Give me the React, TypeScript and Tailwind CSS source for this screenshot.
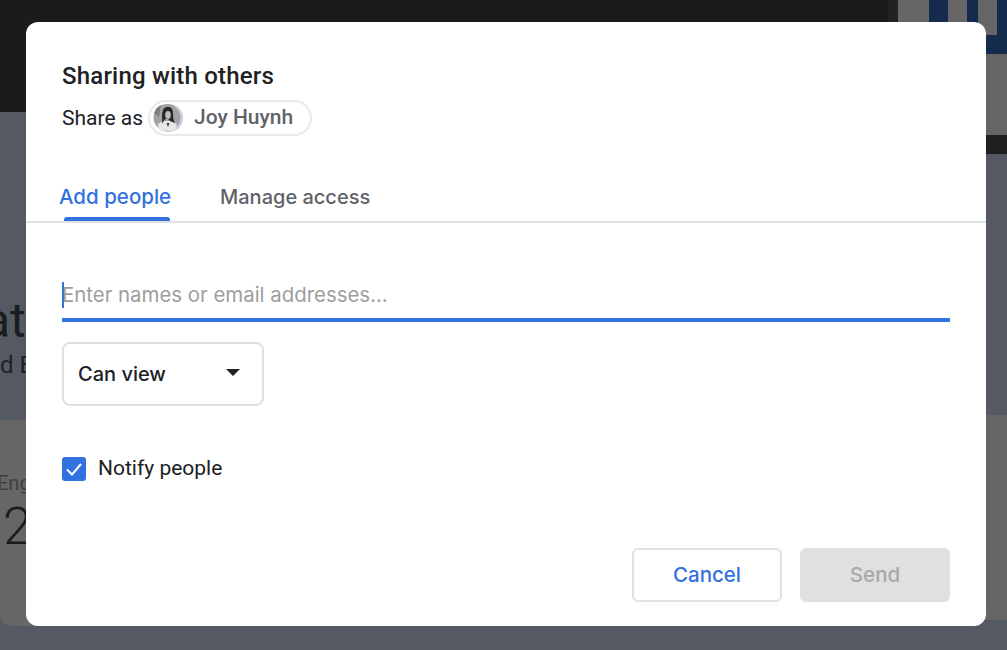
import React from "react";

const Avatar = () => (
  <svg width="30" height="30" viewBox="0 0 30 30" className="shrink-0">
    <circle cx="16" cy="15" r="14" fill="#c5d0e4" />
    <path d="M15 1a14 14 0 0 1 13 9l-8 4L9 3z" fill="#d9e3cc" />
    <path d="M8 28l14 0 3-5-14-3z" fill="#e6dfb8" />
    <circle cx="14" cy="14.500" r="13.500" fill="#a3a3a3" />
    <path d="M1 10a14 14 0 0 1 7-8l-2 12z" fill="#7d7d7d" />
    <path d="M6 27c2 1 12 1 16 0l2-6-6-3h-8l-5 3z" fill="#e8e8e8" />
    <path d="M9 21c1-3-1-9 1-14 2-4 7-4 9-1 2 4 0 9 3 14l-5-2-2-2h-3z" fill="#262626" />
    <ellipse cx="15" cy="12" rx="2.800" ry="4" fill="#bdbdbd" />
    <path d="M13.500 20h3l-1.500 4z" fill="#333" />
  </svg>
);

export default function App() {
  return (
    <div className="relative h-[650px] w-[1007px] overflow-hidden bg-[#555a62] font-['Roboto',sans-serif] text-[#202124]">
      <div className="flex h-[154px]">
        <div className="flex-1">
          <div className="flex h-[112px]">
            <div className="w-[888px] bg-[#1b1b1b]" />
            <div className="flex-1 bg-[#222222]" />
          </div>
        </div>
        <div className="flex w-[109px] flex-col bg-[#666666]">
          <div className="flex h-[54px] flex-col">
            <div className="flex h-[35px]">
              <div className="w-[31px]" />
              <div className="w-[19px] bg-[#152b4e]" />
              <div className="w-[19px]" />
              <div className="w-[11px] bg-[#152b4e]" />
              <div className="w-[19px]" />
              <div className="flex-1 bg-[#152b4e]" />
            </div>
            <div className="h-[19px] bg-[#152b4e]" />
          </div>
          <div className="flex-1" />
          <div className="h-[19px] bg-[#1f1f1f]" />
        </div>
      </div>

      <div className="flex">
        <div className="flex-1">
          <div className="h-[266px] overflow-hidden pt-[139px]">
            <p className="-ml-[16px] text-[48px] leading-[56px] text-[#1b1c1f]">at</p>
            <p className="mt-[2px] text-[24px] leading-[28px] text-[#1f2024]">d E</p>
          </div>
          <div className="h-[206px] rounded-b-[12px] bg-[#666666] pt-[51px]">
            <p className="-ml-[3px] text-[20px] leading-[24px] text-[#404040]">Eng</p>
            <p className="mt-[2px] ml-[3px] text-[52px] leading-[60px] font-light text-[#1b1b1b]">2</p>
          </div>
        </div>
        <div className="w-[50px] pt-[261px]">
          <div className="h-[205px] bg-[#666666]" />
        </div>
      </div>

      <div className="absolute left-[26px] top-[22px] flex h-[604px] w-[960px] flex-col rounded-[12px] bg-white">
        <div className="pl-[36px] pt-[40px]">
          <h2 className="text-[24px] leading-[28px] font-medium tracking-[0.2px] text-[#202124]">Sharing with others</h2>
          <div className="mt-[10px] flex items-center">
            <span className="text-[21px] leading-[28px] text-[#202124]">Share as</span>
            <div className="ml-[5px] flex h-[36px] w-[164px] items-center rounded-full border-2 border-[#e8eaed] pl-[3px]">
              <Avatar />
              <span className="ml-[11px] text-[21px] font-medium text-[#5f6368]">Joy Huynh</span>
            </div>
          </div>
        </div>

        <div className="mt-[42px] flex h-[45px] border-b-2 border-[#dfe1e5] pl-[33px] font-['Inter',sans-serif]">
          <div className="relative w-[161px]">
            <span className="text-[20.500px] leading-[38px] font-medium text-[#3271e0]">Add people</span>
            <span className="absolute bottom-0 left-[5px] h-[4px] w-[106px] rounded-t-[3px] bg-[#3271e0]" />
          </div>
          <span className="text-[20px] leading-[38px] font-medium text-[#5f6368]">Manage access</span>
        </div>

        <div className="mx-[36px] mt-[54px] flex h-[45px] border-b-4 border-[#3271e0] font-['Inter',sans-serif]">
          <span className="mt-[5px] -mr-[2px] h-[26px] w-[2px] bg-[#3271e0]" />
          <span className="text-[20.400px] leading-[36px] text-[#9e9e9e]">Enter names or email addresses...</span>
        </div>

        <div className="ml-[36px] mt-[20px] flex h-[64px] w-[202px] items-center justify-between rounded-[8px] border-2 border-[#e0e0e0] pl-[14px] pr-[22px] font-['Inter',sans-serif]">
          <span className="text-[20px] font-medium text-[#202124]">Can view</span>
          <svg width="14" height="7" viewBox="0 0 14 7" className="-mt-[3px]"><path d="M0 0h14L7 7z" fill="#202124" /></svg>
        </div>

        <div className="ml-[36px] mt-[49px] flex items-center">
          <span className="flex h-[24px] w-[24px] items-center justify-center rounded-[3px] bg-[#3271e0]">
            <svg width="18" height="14" viewBox="0 0 18 14" fill="none"><path d="M2 7.500l5 5L16 2" stroke="#fff" strokeWidth="2" /></svg>
          </span>
          <span className="ml-[12px] -mt-[1px] text-[21px] leading-[28px] text-[#202124]">Notify people</span>
        </div>

        <div className="mt-auto mb-[24px] mr-[36px] flex justify-end gap-[18px] font-['Inter',sans-serif]">
          <button className="h-[54px] w-[150px] rounded-[6px] border-2 border-[#dfe1e5] bg-white text-[20.500px] font-medium text-[#3271e0]">Cancel</button>
          <button className="h-[54px] w-[150px] rounded-[6px] bg-[#e0e0e0] text-[20.500px] font-medium text-[#a8a8a8]">Send</button>
        </div>
      </div>
    </div>
  );
}
